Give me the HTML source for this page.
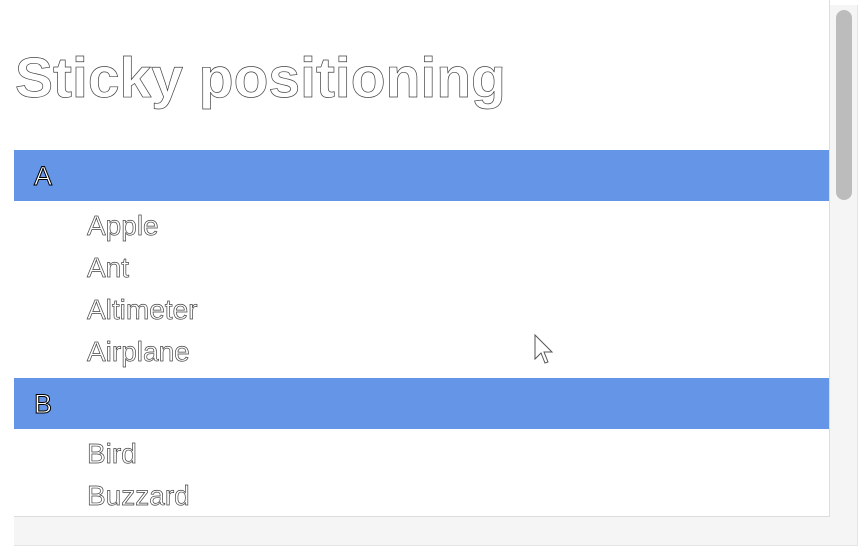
<!DOCTYPE html>
<html><head><style>
html,body{margin:0;padding:0;width:868px;height:546px;overflow:hidden;background:#fff;font-family:"Liberation Sans",Arial,sans-serif;}
.o{color:#fff;-webkit-text-stroke:0.7px #444;}
.frame{position:absolute;left:14px;top:5px;width:843px;height:540px;background:#f5f5f5;border-right:1px solid #e4e4e4;border-bottom:1px solid #e4e4e4;}
.content{position:absolute;left:0;top:-5px;width:815px;height:516px;background:#fff;border-right:1px solid #ddd;border-bottom:1px solid #ddd;overflow:hidden;}
.thumb{position:absolute;left:822px;top:5px;width:16px;height:190px;background:#bcbcbc;border-radius:8px;}
h1{position:absolute;left:1px;top:48px;margin:0;font-size:57px;line-height:60px;font-weight:bold;}
.hd{position:absolute;left:0;width:815px;height:51px;background:#6495e6;}
.hd span{position:absolute;left:20px;top:11px;font-size:27px;line-height:30px;color:#fff;-webkit-text-stroke:1px #000;}
.it{position:absolute;left:73px;font-size:28px;line-height:42px;}
</style></head><body>
<div class="frame">
<div class="content">
<h1 class="o">Sticky positioning</h1>
<div class="hd" style="top:150px"><span>A</span></div>
<div class="it o" style="top:205px">Apple</div>
<div class="it o" style="top:247px">Ant</div>
<div class="it o" style="top:289px">Altimeter</div>
<div class="it o" style="top:331px">Airplane</div>
<div class="hd" style="top:378px"><span>B</span></div>
<div class="it o" style="top:433px">Bird</div>
<div class="it o" style="top:475px">Buzzard</div>
</div>
<div class="thumb"></div>
</div>
<svg style="position:absolute;left:533px;top:333px" width="22" height="36" viewBox="0 0 22 36"><path d="M2 2 L2 26 L8 20 L12 30 L15 29 L11 19 L19 19 Z" fill="#fff" stroke="#555" stroke-width="1"/></svg>
</body></html>
